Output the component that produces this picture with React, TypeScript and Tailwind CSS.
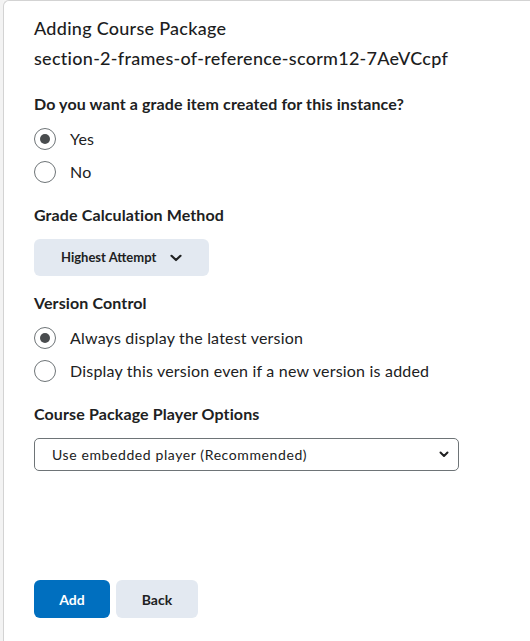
import React from "react";

function Radio({ checked, label }: { checked: boolean; label: string }) {
  return (
    <label className="flex h-[33px] items-center gap-[14px]">
      <span className="flex h-[22px] w-[22px] items-center justify-center rounded-full border border-[#6e7477] bg-white">
        {checked && <span className="h-[10px] w-[10px] rounded-full bg-[#494c4e]" />}
      </span>
      <span className="text-[16px] leading-[24px] tracking-[0.2px] text-[#202122]">{label}</span>
    </label>
  );
}

function Label({ children, className = "" }: { children: React.ReactNode; className?: string }) {
  return (
    <div className={`text-[16px] font-bold leading-[24px] tracking-[0.12px] text-[#202122] ${className}`}>
      {children}
    </div>
  );
}

export default function App() {
  return (
    <div
      className="flex h-[641px] w-[530px] bg-[#f5f5f5]"
      style={{ fontFamily: "Lato, 'Noto Sans', sans-serif" }}
    >
      <div className="w-[3px] shrink-0 bg-[#f3f3f3]" />
      <div className="flex-1 rounded-tl-[6px] border-l border-t border-[#d3d3d3] bg-white pl-[30px] pt-[12px]">
        <div className="text-[18px] font-medium leading-[30px] tracking-[0.28px] text-[#1c1d1e]">
          <div>Adding Course Package</div>
          <div>section-2-frames-of-reference-scorm12-7AeVCcpf</div>
        </div>

        <Label className="mt-[19px]">Do you want a grade item created for this instance?</Label>
        <div className="mt-[6px]">
          <Radio checked label="Yes" />
          <Radio checked={false} label="No" />
        </div>

        <Label className="mt-[15px]">Grade Calculation Method</Label>
        <button className="mt-[12px] flex h-[37px] w-[175px] items-center rounded-[6px] bg-[#e3e9f1] pl-[27px] text-[13px] font-bold text-[#202122]">
          Highest Attempt
          <svg className="ml-[14px]" width="12" height="8" viewBox="0 0 12 8" fill="none">
            <path d="M1.5 1.8 6 6 10.5 1.8" stroke="#202122" strokeWidth="2.2" strokeLinecap="round" strokeLinejoin="round" />
          </svg>
        </button>

        <Label className="mt-[15px]">Version Control</Label>
        <div className="mt-[6px]">
          <Radio checked label="Always display the latest version" />
          <Radio checked={false} label="Display this version even if a new version is added" />
        </div>

        <Label className="mt-[15px]">Course Package Player Options</Label>
        <div className="mt-[12px] flex h-[33px] w-[425px] items-center justify-between rounded-[5px] border border-[#6e7477] pl-[17px] pr-[9px]">
          <span className="text-[14px] tracking-[0.6px] text-[#202122]">Use embedded player (Recommended)</span>
          <svg width="10" height="7" viewBox="0 0 10 7" fill="none">
            <path d="M1.5 1.5 5 5 8.5 1.5" stroke="#202122" strokeWidth="2" strokeLinecap="round" strokeLinejoin="round" />
          </svg>
        </div>

        <div className="mt-[109px] flex gap-[6px]">
          <button className="h-[38px] w-[76px] rounded-[6px] bg-[#006fbf] text-[14px] font-bold text-white">Add</button>
          <button className="h-[38px] w-[82px] rounded-[6px] bg-[#e3e9f1] text-[14px] font-bold text-[#202122]">Back</button>
        </div>
      </div>
    </div>
  );
}
